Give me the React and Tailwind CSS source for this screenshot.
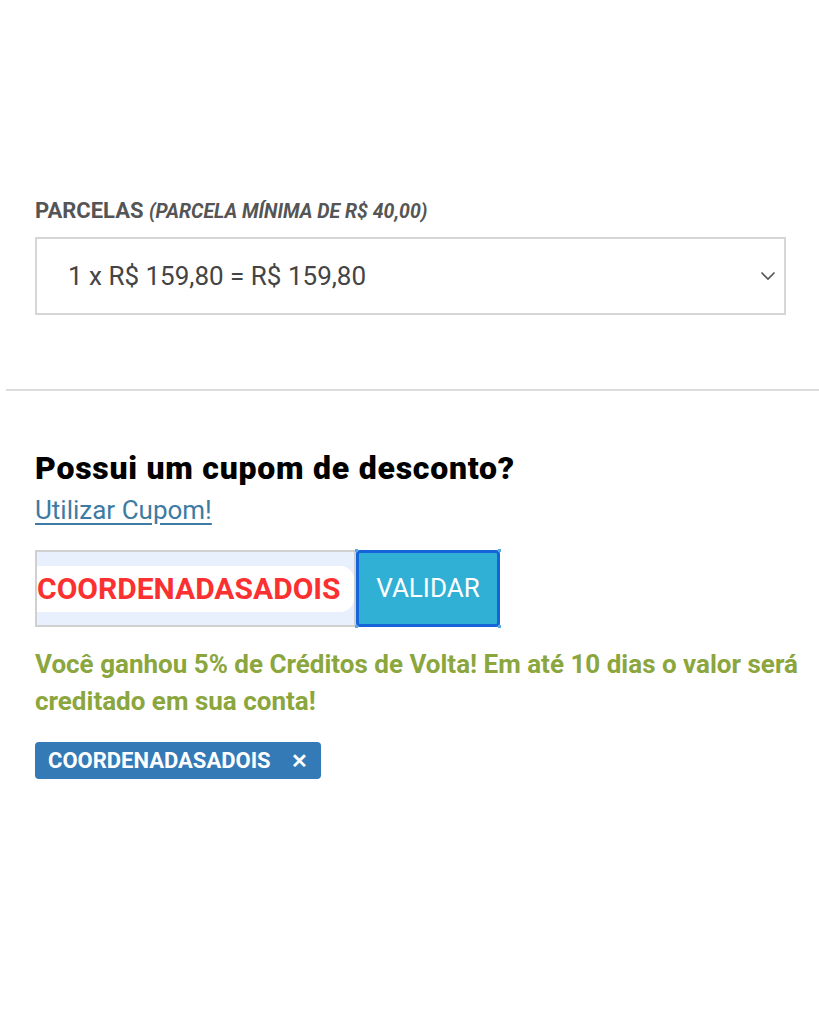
export default function App() {
  return (
    <div className="w-[819px] h-[1024px] bg-white font-['Roboto',sans-serif] pt-[196px]">
      <div className="px-[35px]">
        <div className="text-[#555] font-bold text-[22px] leading-[30px]">
          PARCELAS <span className="italic text-[19.5px]">(PARCELA MÍNIMA DE R$ 40,00)</span>
        </div>
        <div className="mt-[10px] h-[78px] w-[751px] border-2 border-[#d6d6d6] flex items-center justify-between pl-[31px] pr-[8px]">
          <span className="text-[26px] text-[#444]">1 x R$ 159,80 = R$ 159,80</span>
          <svg width="16" height="10" viewBox="0 0 16 10" fill="none" stroke="#555" strokeWidth="1.6">
            <path d="M1.5 1.5 L8 8 L14.5 1.5" />
          </svg>
        </div>
      </div>

      <div className="mt-[74px] ml-[6px] h-[2px] bg-[#dcdcdc]" />

      <div className="pl-[35px] pr-[20px] pt-[58px]">
        <h2 className="text-[32px] font-black text-black leading-[38px] tracking-[0.75px]">Possui um cupom de desconto?</h2>
        <a className="block mt-[7px] text-[26px] text-[#3d7ba3] underline underline-offset-[4px] leading-[32px] w-fit">Utilizar Cupom!</a>

        <div className="mt-[24px] flex items-stretch h-[77px]">
          <div className="w-[321px] border-2 border-[#d0d0d0] bg-[#e8f0fe] flex items-center">
            <div className="bg-white rounded-r-[14px] h-[46px] w-[318px] flex items-center">
              <span className="text-[30px] font-bold text-[#fb3030]">COORDENADASADOIS</span>
            </div>
          </div>
          <div className="relative">
            <button className="h-full w-[144px] bg-[#31b0d5] border-[3px] border-[#1565d8] rounded-[4px] text-white text-[26px]">
              VALIDAR
            </button>
            <span className="absolute -top-[1px] -left-[1px] w-[3px] h-[3px] bg-[#5aa9e6]" />
            <span className="absolute -top-[1px] -right-[1px] w-[3px] h-[3px] bg-[#5aa9e6]" />
            <span className="absolute -bottom-[1px] -left-[1px] w-[3px] h-[3px] bg-[#5aa9e6]" />
            <span className="absolute -bottom-[1px] -right-[1px] w-[3px] h-[3px] bg-[#5aa9e6]" />
          </div>
        </div>

        <p className="mt-[19px] text-[26px] font-bold text-[#8aa63d] leading-[37px]">
          Você ganhou 5% de Créditos de Volta! Em até 10 dias o valor será creditado em sua conta!
        </p>

        <div className="mt-[22px] inline-flex items-center h-[37px] bg-[#337ab7] rounded-[4px] pl-[13px] pr-[13px] gap-[20px] text-white font-bold text-[22px]">
          <span>COORDENADASADOIS</span>
          <span className="text-[20px]">✕</span>
        </div>
      </div>
    </div>
  );
}
